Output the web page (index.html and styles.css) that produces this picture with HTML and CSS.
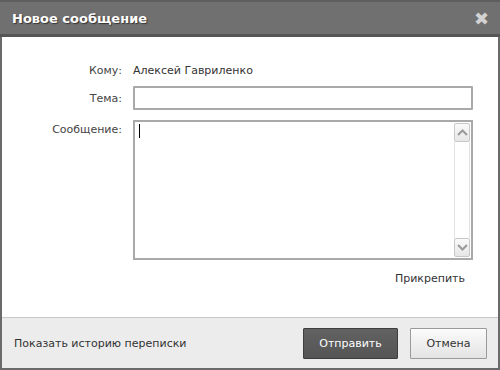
FILE: index.html
```html
<!DOCTYPE html>
<html lang="ru">
<head>
    <meta charset="UTF-8">
    <title>Новое сообщение</title>
    <link rel="stylesheet" href="styles.css">
</head>
<body>
    <div class="dialog">
        <!-- Header -->
        <div class="dialog-head">
            <span class="dialog-title">Новое сообщение</span>
            <span class="close-btn">✖</span>
        </div>

        <!-- Form -->
        <div class="dialog-body">
            <div class="row row-to">
                <span class="label">Кому:</span>
                <span class="value">Алексей Гавриленко</span>
            </div>
            <div class="row">
                <span class="label">Тема:</span>
                <div class="input"></div>
            </div>
            <div class="row row-msg">
                <span class="label">Сообщение:</span>
                <div class="textarea">
                    <span class="caret"></span>
                    <div class="scroll">
                        <div class="scroll-btn">
                            <svg width="11" height="7" viewBox="0 0 11 7"><path d="M1 6 L5.5 1.5 L10 6" fill="none" stroke="#9a9a9a" stroke-width="2"/></svg>
                        </div>
                        <div class="scroll-track"></div>
                        <div class="scroll-btn">
                            <svg width="11" height="7" viewBox="0 0 11 7"><path d="M1 1 L5.5 5.5 L10 1" fill="none" stroke="#9a9a9a" stroke-width="2"/></svg>
                        </div>
                    </div>
                </div>
            </div>
            <div class="attach">Прикрепить</div>
        </div>

        <!-- Footer -->
        <div class="dialog-foot">
            <span class="history">Показать историю переписки</span>
            <div class="buttons">
                <button class="btn btn-send">Отправить</button>
                <button class="btn btn-cancel">Отмена</button>
            </div>
        </div>
    </div>
</body>
</html>
```

FILE: styles.css
```css
body {
    margin: 0;
    padding: 0;
    background-color: #ffffff;
    font-family: "DejaVu Sans", Tahoma, sans-serif;
    font-size: 11px;
    color: #333;
}
.dialog {
    width: 500px;
    height: 370px;
    box-sizing: border-box;
    border: 2px solid #6a6a6a;
    border-top: none;
    display: flex;
    flex-direction: column;
}
.dialog-head {
    height: 32px;
    background-color: #707070;
    border-top: 2px solid #5e5e5e;
    border-bottom: 3px solid #555;
    margin: 0 -2px;
    display: flex;
    align-items: center;
    justify-content: space-between;
    padding: 0 11px 0 12px;
}
.dialog-title {
    color: #fff;
    font-weight: bold;
    font-size: 13px;
    text-shadow: 1px 1px 1px #333;
}
.close-btn {
    color: #d2d2d2;
    font-size: 18px;
}
.dialog-body {
    flex: 1;
    padding: 22px 24px 0 0;
}
.row {
    display: flex;
    align-items: center;
    margin-bottom: 10px;
}
.label {
    width: 120px;
    text-align: right;
    padding-right: 11px;
    color: #444;
}
.row-to {
    height: 22px;
    margin-bottom: 5px;
}
.value {
    color: #333;
}
.input {
    width: 336px;
    height: 20px;
    border: 2px solid #a9a9a9;
    border-radius: 1px;
}
.row-msg {
    align-items: flex-start;
}
.row-msg .label {
    padding-top: 3px;
}
.textarea {
    width: 336px;
    height: 136px;
    border: 2px solid #a9a9a9;
    position: relative;
}
.caret {
    position: absolute;
    left: 4px;
    top: 2px;
    width: 1px;
    height: 14px;
    background: #000;
}
.scroll {
    position: absolute;
    right: 1px;
    top: 1px;
    bottom: 1px;
    width: 16px;
    display: flex;
    flex-direction: column;
}
.scroll-btn {
    height: 17px;
    border: 1px solid #c8c8c8;
    border-radius: 2px;
    background: linear-gradient(#fafafa, #e6e6e6);
    display: flex;
    justify-content: center;
    align-items: center;
}
.scroll-track {
    flex: 1;
    border-left: 1px solid #e2e2e2;
    border-right: 1px solid #e2e2e2;
}
.attach {
    text-align: right;
    padding-right: 9px;
    margin-top: 12px;
    color: #333;
}
.dialog-foot {
    height: 50px;
    background-color: #ececec;
    border-top: 1px solid #c9c9c9;
    display: flex;
    align-items: center;
    justify-content: space-between;
    padding: 0 11px 0 12px;
}
.history {
    color: #333;
}
.buttons {
    display: flex;
    gap: 12px;
}
.btn {
    font-family: "DejaVu Sans", Tahoma, sans-serif;
    font-size: 11px;
    height: 31px;
    border-radius: 1px;
    cursor: pointer;
}
.btn-send {
    width: 95px;
    background: linear-gradient(#626262, #555);
    border: 1px solid #3e3e3e;
    color: #fff;
}
.btn-cancel {
    width: 77px;
    background: linear-gradient(#fbfbfb, #e3e3e3);
    border: 1px solid #9a9a9a;
    color: #333;
}
```
